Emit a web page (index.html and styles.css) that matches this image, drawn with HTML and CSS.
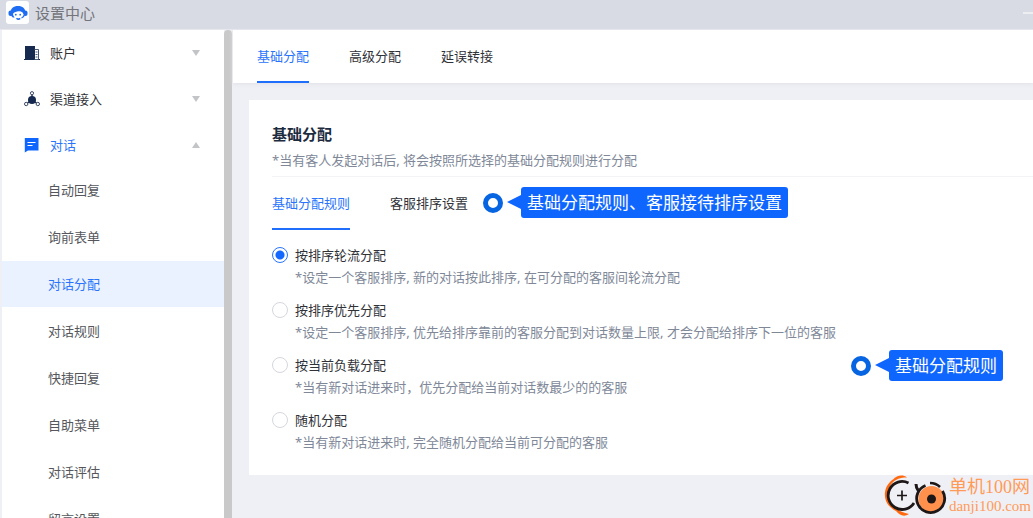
FILE: index.html
```html
<!DOCTYPE html>
<html lang="zh-CN">
<head>
<meta charset="utf-8">
<title>设置中心</title>
<link rel="stylesheet" href="styles.css">
</head>
<body>
<div class="app">
  <header class="titlebar">
    <span class="logo">
      <svg width="20" height="16" viewBox="0 0 20 16" aria-hidden="true">
        <rect x="0.500" y="5.500" width="4" height="5.500" rx="2" fill="#1f6df2"/>
        <rect x="15.500" y="5.500" width="4" height="5.500" rx="2" fill="#1f6df2"/>
        <path d="M2.500 8C2.500 3.500 5.500 1 10 1S17.500 3.500 17.500 8L15.500 9C14.500 6.500 12.500 5.800 10.500 6.300C8.500 7 6.500 6.500 5.200 8.600C4.700 9.600 5.400 11 6.600 12.400L4.800 12.400C3.300 11.300 2.500 10 2.500 8Z" fill="#1f6df2"/>
        <path d="M16.500 9.500C16 11.500 15 12.500 13.500 13" fill="none" stroke="#1f6df2" stroke-width="1.300"/>
        <circle cx="7.800" cy="9.700" r=".9" fill="#1f6df2"/>
        <circle cx="12.200" cy="9.700" r=".9" fill="#1f6df2"/>
        <path d="M8.500 13.200Q10.300 15 12.200 13.400" fill="none" stroke="#1f6df2" stroke-width="1.500"/>
      </svg>
    </span>
    <h1 class="app-name">设置中心</h1>
    <button class="minimize" type="button" aria-label="最小化"></button>
  </header>

  <div class="body">
    <nav class="sidebar">
      <button class="group" type="button">
        <svg class="group-icon" width="16" height="16" viewBox="0 0 16 16" aria-hidden="true">
          <path d="M1 1h10V15H1zM0 14h16v1H0z" fill="#16294f"/>
          <path d="M10.500 4.500h4V14.500h-4M11.500 7h2M11.500 9.500h2M11.500 12h2" fill="none" stroke="#4a5875"/>
        </svg>
        <span class="group-name">账户</span><span class="caret"></span>
      </button>
      <button class="group" type="button">
        <svg class="group-icon" width="16" height="16" viewBox="0 0 16 16" aria-hidden="true">
          <path d="M8 3v4M8 9l-6 4M8 9l6 4" stroke="#16294f" stroke-width="1.400"/>
          <circle cx="8" cy="9" r="4" fill="#16294f"/>
          <g fill="#fff" stroke="#3c4a68"><circle cx="8" cy="2.200" r="1.600"/><circle cx="2.200" cy="13" r="1.700"/><circle cx="13.800" cy="13" r="1.700"/></g>
        </svg>
        <span class="group-name">渠道接入</span><span class="caret"></span>
      </button>
      <button class="group open" type="button" aria-expanded="true">
        <svg class="group-icon" width="16" height="16" viewBox="0 0 16 16" aria-hidden="true">
          <path d="M.8 1h13.700v12.500H4L.8 15.500V1z" fill="#0f66ff"/>
          <path d="M3.500 5.500h8M3.500 8.500h5" stroke="#fff" stroke-width="1.200"/>
        </svg>
        <span class="group-name">对话</span><span class="caret"></span>
      </button>
      <div class="submenu">
        <a class="item" href="#">自动回复</a>
        <a class="item" href="#">询前表单</a>
        <a class="item active" href="#">对话分配</a>
        <a class="item" href="#">对话规则</a>
        <a class="item" href="#">快捷回复</a>
        <a class="item" href="#">自助菜单</a>
        <a class="item" href="#">对话评估</a>
        <a class="item" href="#">留言设置</a>
      </div>
    </nav>
    <div class="scrollbar"></div>

    <main class="main">
      <nav class="tabs">
        <a class="tab active" href="#">基础分配</a>
        <a class="tab" href="#">高级分配</a>
        <a class="tab" href="#">延误转接</a>
      </nav>

      <section class="card">
        <h2 class="card-title">基础分配</h2>
        <p class="note card-note">*当有客人发起对话后, 将会按照所选择的基础分配规则进行分配</p>
        <div class="subtabs">
          <a class="subtab active" href="#">基础分配规则</a>
          <a class="subtab" href="#">客服排序设置</a>
          <div class="callout callout-tabs"><span class="ring"></span><span class="bubble">基础分配规则、客服接待排序设置</span></div>
        </div>
        <form class="options">
          <div class="option">
            <input class="radio" type="radio" name="rule" id="rule-turn" checked>
            <label class="option-name" for="rule-turn">按排序轮流分配</label>
            <p class="note">*设定一个客服排序, 新的对话按此排序, 在可分配的客服间轮流分配</p>
          </div>
          <div class="option">
            <input class="radio" type="radio" name="rule" id="rule-first">
            <label class="option-name" for="rule-first">按排序优先分配</label>
            <p class="note">*设定一个客服排序, 优先给排序靠前的客服分配到对话数量上限, 才会分配给排序下一位的客服</p>
          </div>
          <div class="option">
            <input class="radio" type="radio" name="rule" id="rule-load">
            <label class="option-name" for="rule-load">按当前负载分配</label>
            <p class="note">*当有新对话进来时，优先分配给当前对话数最少的的客服</p>
            <div class="callout callout-rule"><span class="ring"></span><span class="bubble">基础分配规则</span></div>
          </div>
          <div class="option">
            <input class="radio" type="radio" name="rule" id="rule-random">
            <label class="option-name" for="rule-random">随机分配</label>
            <p class="note">*当有新对话进来时, 完全随机分配给当前可分配的客服</p>
          </div>
        </form>
      </section>
    </main>
  </div>

  <div class="watermark">
    <svg width="64" height="44" viewBox="0 0 64 44" aria-hidden="true">
      <path d="M23 3.500C19 .5 13 1 9 5.500C2 10 -1 19 2 27C4 32 8 35 12 37C15 41 20 43.500 25 40C16 38 7 33 4.500 25C2.500 17 6 9 12 6C15 4 19 3.500 23 3.500Z" fill="#ff6a10"/>
      <path d="M24.500 9A14 14 0 1 0 30 29" fill="none" stroke="#1d1718" stroke-width="2.800"/>
      <path d="M18 16.500v10M13 21.500h10" stroke="#1d1718" stroke-width="1.700"/>
      <circle cx="47.500" cy="25" r="13" fill="#ff914d"/>
      <path d="M32 10Q32 14 34.500 17" fill="none" stroke="#1d1718" stroke-width="3"/>
      <path d="M41.500 11.500A14 14 0 1 0 58.500 17" fill="none" stroke="#1d1718" stroke-width="2.800"/>
      <path d="M46 9Q52 9 56 13" fill="none" stroke="#1d1718" stroke-width="2.500"/>
      <circle cx="47.500" cy="25" r="4.500" fill="#1d1718"/>
    </svg>
    <div class="watermark-text">
      <div class="watermark-name">单机100网</div>
      <div class="watermark-url">danji100.com</div>
    </div>
  </div>
</div>
</body>
</html>
```
FILE: styles.css
```css
* { box-sizing: border-box; }

body {
  margin: 0;
  font: 13px/22px "Noto Sans", "Noto Sans CJK SC", sans-serif;
  color: #303238;
  background: #eff0f5;
}

h1, h2, p { margin: 0; font-weight: normal; }
a { color: inherit; text-decoration: none; }

button {
  border: 0;
  padding: 0;
  background: none;
  font: inherit;
  color: inherit;
}

.app {
  position: relative;
  display: flex;
  flex-direction: column;
  height: 100vh;
  overflow: hidden;
}

.titlebar {
  flex: none;
  display: flex;
  align-items: center;
  gap: 6px;
  height: 30px;
  padding: 0 0 4px 6px;
  background: #d8dbe4;
  border-bottom: 1px solid #e6e8ee;
}

.logo {
  display: flex;
  align-items: center;
  justify-content: center;
  width: 23px;
  height: 23px;
  border-radius: 3px;
  background: #fff;
}

.app-name { font-size: 15px; color: #73757b; }

.minimize {
  width: 10px;
  height: 2px;
  margin-left: auto;
  background: #eceef2;
}

.body { flex: 1; display: flex; min-height: 0; }

.sidebar {
  flex: none;
  width: 222px;
  margin-left: 2px;
  overflow: hidden;
  background: #fff;
}

.group {
  display: flex;
  align-items: center;
  gap: 10px;
  width: 100%;
  height: 46px;
  padding: 0 24px 0 22px;
  text-align: left;
}

.group-name { flex: 1; }
.group.open, .item.active { color: #2a74fb; }

.caret {
  border: 4px solid transparent;
  border-top: 6px solid #c2c4c8;
  border-bottom: 0;
}

.open .caret {
  border-top: 0;
  border-bottom: 6px solid #c2c4c8;
}

.submenu { display: grid; gap: 1px; margin-top: -1px; }

.item {
  padding: 12px 0 12px 46px;
  color: #55575c;
}

.item.active { background: #ebf2ff; }

.scrollbar {
  flex: none;
  width: 8px;
  border-radius: 4px 4px 0 0;
  background: #c9c9c9;
}

.main { flex: 1; min-width: 0; padding-left: 1px; }

.tabs {
  display: flex;
  gap: 40px;
  padding-left: 24px;
  background: #fff;
  box-shadow: 0 1px 4px #dfe1e8;
}

.tab { padding: 15px 0 14px; border-bottom: 2px solid transparent; }

.tab.active, .subtab.active {
  color: #2a74fb;
  border-bottom-color: #1f6ffc;
}

.card {
  margin: 17px 0 0 16px;
  padding: 23px 0 22px 23px;
  background: #fff;
}

.card-title { font-size: 15px; font-weight: bold; color: #1d2b3e; }
.note { color: #808898; }

.card-note {
  padding: 4px 0 5px;
  border-bottom: 1px solid #f3f3f5;
}

.subtabs { display: flex; gap: 40px; }
.subtab { padding: 15px 0 14px; border-bottom: 2px solid transparent; }

.callout {
  display: flex;
  align-items: center;
  gap: 18px;
}

.callout-tabs { margin-left: -25px; padding-bottom: 2px; }

.ring {
  width: 20px;
  height: 20px;
  border: 5px solid #0865e2;
  border-radius: 50%;
  background: #fff;
}

.bubble {
  position: relative;
  padding: 4px 6px;
  border-radius: 3px;
  background: #0f66ff;
  color: #fff;
  font-size: 17px;
  line-height: 23px;
  white-space: nowrap;
}

.bubble::before {
  content: "";
  position: absolute;
  top: 8px;
  right: 100%;
  border: 7px solid transparent;
  border-right: 14px solid #0f66ff;
  border-left: 0;
}

.options { display: grid; gap: 11px; padding-top: 14px; }

.option {
  position: relative;
  display: grid;
  grid-template-columns: 16px 1fr;
  column-gap: 7px;
  align-items: center;
}

.option .note { grid-column: 2; }

.radio {
  appearance: none;
  width: 16px;
  height: 16px;
  margin: 0;
  border: 1px solid #d5d7dc;
  border-radius: 50%;
  background: #fff;
}

.radio:checked {
  border-color: #2a74fb;
  background: radial-gradient(#1268ff 4px, #fff 5px);
}

.callout-rule { position: absolute; left: 579px; top: -4px; }

.watermark {
  position: absolute;
  right: 2px;
  bottom: 0;
  display: flex;
  align-items: center;
  gap: 1px;
  color: #ff9a58;
  font-family: "Liberation Serif", "Noto Sans CJK SC", serif;
}

.watermark-name { font-size: 18px; line-height: 20px; }
.watermark-url { font-size: 15px; line-height: 18px; }
```
